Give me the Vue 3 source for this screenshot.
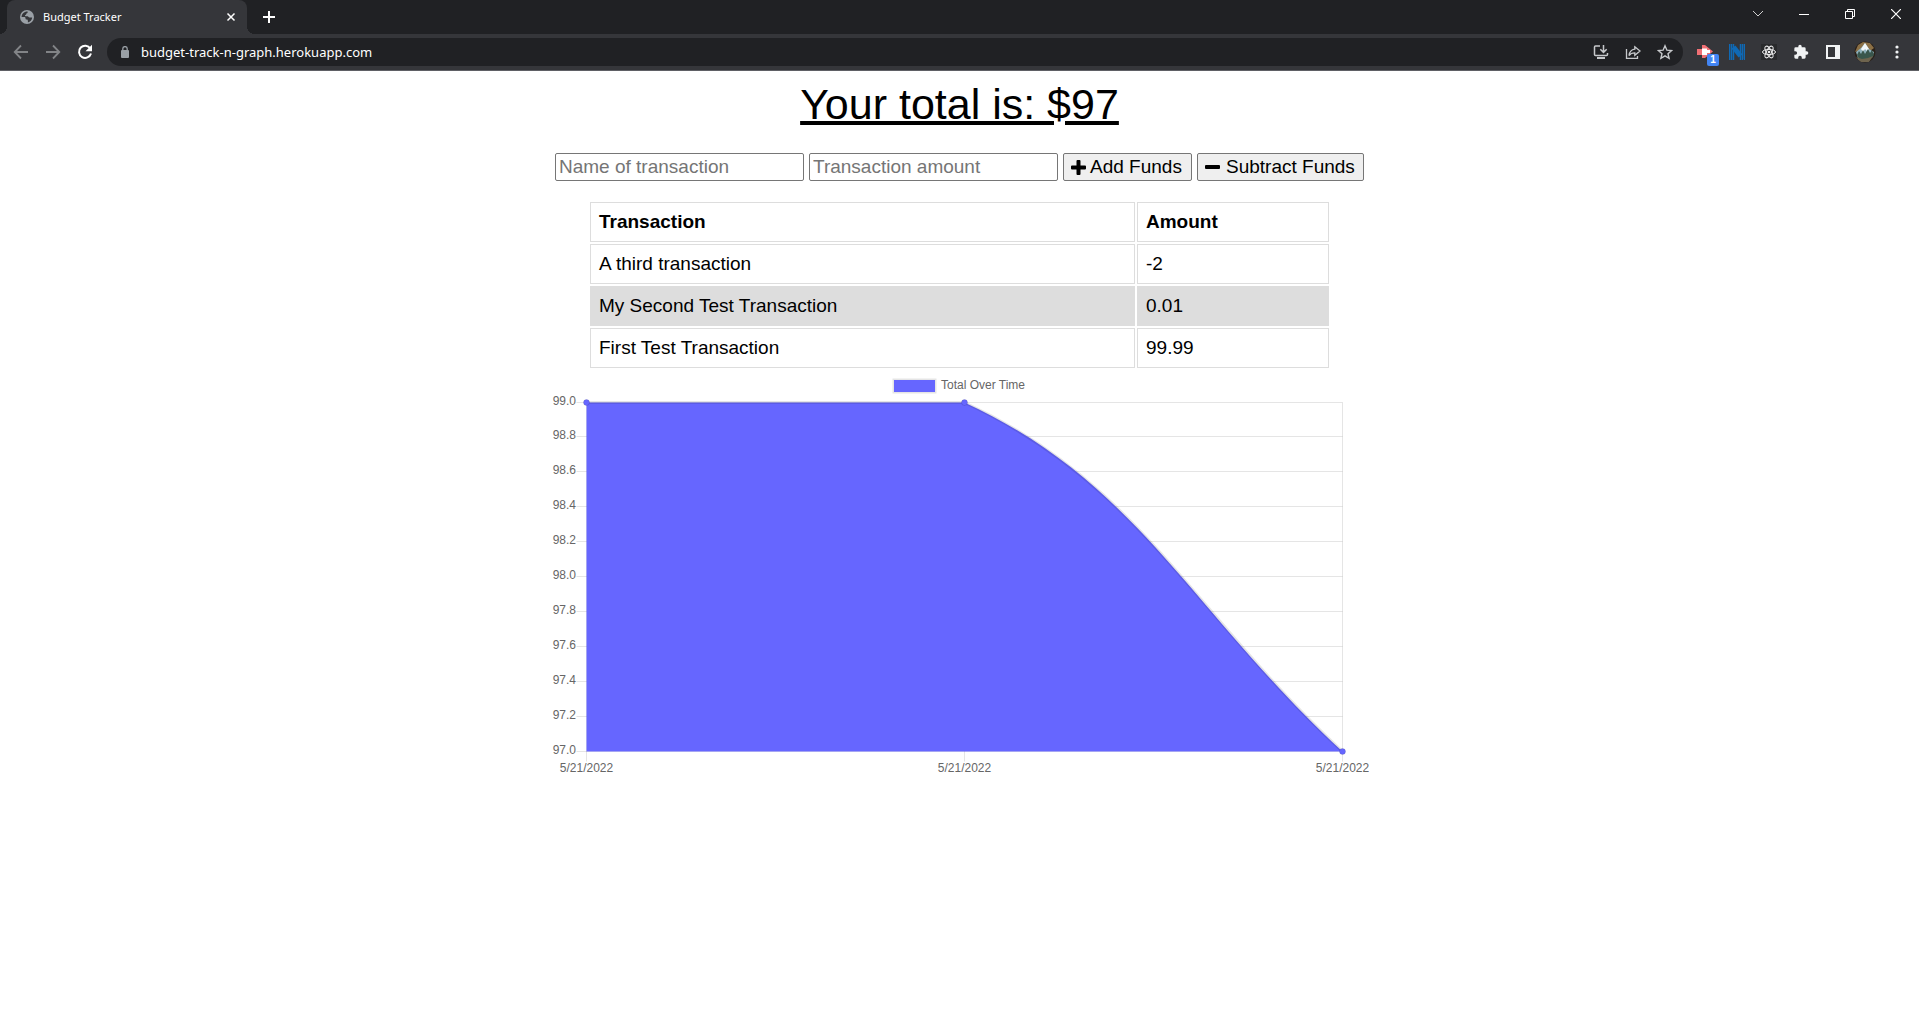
<script setup>
import { ref } from 'vue'

const name = ref('')
const amount = ref('')

const transactions = [
  { name: 'A third transaction', value: '-2' },
  { name: 'My Second Test Transaction', value: '0.01' },
  { name: 'First Test Transaction', value: '99.99' },
]

const left = 36.5
const right = 792.5
const middle = (left + right) / 2
const top = 32.5
const bottom = 381.5

const ticks = Array.from({ length: 11 }, (_, i) => ({
  label: (99 - i * 0.2).toFixed(1),
  y: Math.floor(32 + i * 34.9) + 0.5,
}))

const points = [
  { x: left, y: top },
  { x: middle, y: top },
  { x: right, y: bottom },
]

const line = `M${left} ${top}L${middle} ${top}C${middle + 174.4} ${top + 80.5} ${right - 151.2} ${bottom - 139.6} ${right} ${bottom}`
const area = `${line}L${left} ${bottom}Z`
</script>

<template>
  <div class="browser">
    <header class="chrome">
      <div class="tabstrip">
        <div class="tab">
          <svg class="favicon" width="14" height="14" viewBox="0 0 14 14" aria-hidden="true">
            <circle cx="7" cy="7" r="7" fill="#9aa0a6" />
            <path d="M7.6 1.6c.4 1-.2 1.7-1.2 1.9-.3.7-.2 1.2-1 1.5-.7.3-.5 1.2.2 1.2h2c.9 0 .9 1.3 1.9 1.3h2.7c-.2 2.6-2 4.5-4.3 4.900v-1.500c0-.8-.5-1.300-1.300-1.300-.8-.1-1.100-.6-1.100-1.400 0-.8-.5-1.200-1.200-1.200H1.600C1.500 4.300 4 1.500 7.600 1.600z" fill="#35363a" />
          </svg>
          <span class="tab-title">Budget Tracker</span>
          <button class="icon-button tab-close" aria-label="Close tab">
            <svg width="10" height="10" viewBox="0 0 10 10"><path d="M1.500 1.500l7 7M8.500 1.500l-7 7" stroke="#fff" stroke-width="1.500" /></svg>
          </button>
        </div>
        <button class="icon-button new-tab" aria-label="New tab">
          <svg width="12" height="12" viewBox="0 0 12 12"><path d="M6 0v12M0 6h12" stroke="#fff" stroke-width="2" /></svg>
        </button>
        <div class="window-controls">
          <button class="icon-button" aria-label="Search tabs">
            <svg width="12" height="12" viewBox="0 0 12 12"><path d="M1 3l5 5 5-5" fill="none" stroke="#d0d0d0" /></svg>
          </button>
          <button class="icon-button" aria-label="Minimize">
            <svg width="10" height="10" viewBox="0 0 10 10"><path d="M0 5.500h10" stroke="#fff" /></svg>
          </button>
          <button class="icon-button" aria-label="Restore">
            <svg width="10" height="10" viewBox="0 0 10 10"><path d="M.5 2.500h7v7h-7zM2.500 2.500v-2h7v7h-2" fill="none" stroke="#fff" /></svg>
          </button>
          <button class="icon-button" aria-label="Close">
            <svg width="10" height="10" viewBox="0 0 10 10"><path d="M0 0l10 10M10 0L0 10" stroke="#fff" stroke-width="1.200" /></svg>
          </button>
        </div>
      </div>

      <div class="toolbar">
        <button class="icon-button" aria-label="Back">
          <svg width="16" height="16" viewBox="0 0 16 16"><path d="M15 8H2M8 1.500L1.700 8 8 14.500" fill="none" stroke="#828487" stroke-width="1.800" /></svg>
        </button>
        <button class="icon-button" aria-label="Forward">
          <svg width="16" height="16" viewBox="0 0 16 16"><path d="M1 8h13M8 1.500L14.300 8 8 14.500" fill="none" stroke="#828487" stroke-width="1.800" /></svg>
        </button>
        <button class="icon-button" aria-label="Reload">
          <svg width="16" height="16" viewBox="0 0 16 16">
            <path d="M13.300 4.500A6.100 6.100 0 1 0 14 9.500" fill="none" stroke="#fff" stroke-width="2" />
            <path d="M15 .8v6.500H8.500z" fill="#fff" />
          </svg>
        </button>
        <div class="omnibox">
          <svg class="lock" width="8" height="12" viewBox="0 0 8 12" aria-hidden="true">
            <path d="M1.800 5V2.800a2.200 2.200 0 0 1 4.400 0V5" fill="none" stroke="#9aa0a6" stroke-width="1.300" />
            <rect y="4" width="8" height="8" rx="1" fill="#9aa0a6" />
          </svg>
          <input class="url" type="text" value="budget-track-n-graph.herokuapp.com" aria-label="Address" />
          <button class="icon-button" aria-label="Install app">
            <svg width="16" height="16" viewBox="0 0 16 16" fill="none" stroke="#c7c9cc" stroke-width="1.500">
              <path d="M7 2H2.500Q1.500 2 1.500 3v7.500q0 1 1 1h11q1 0 1-1V9" />
              <path d="M4 14h8" stroke-width="2" />
              <path d="M10.500 1v7M7.300 5.200l3.200 3.200 3.200-3.200" />
            </svg>
          </button>
          <button class="icon-button" aria-label="Share">
            <svg width="16" height="16" viewBox="0 0 16 16" fill="none" stroke="#c7c9cc" stroke-width="1.300">
              <path d="M1.500 5v9.300h11V12" />
              <path d="M9.800 2.800L15 7l-5.200 4.300V8.800C7 8.800 5.200 9.700 4 11.600c.4-3.500 2.300-5.900 5.800-6.400z" />
            </svg>
          </button>
          <button class="icon-button" aria-label="Bookmark">
            <svg width="16" height="16" viewBox="0 0 16 16"><path d="M8 1.800l1.900 4.400 4.700.4-3.600 3.100 1.100 4.700L8 11.900l-4.100 2.500L5 9.700 1.400 6.600l4.700-.4z" fill="none" stroke="#c7c9cc" stroke-width="1.400" /></svg>
          </button>
        </div>
        <div class="extensions">
          <button class="icon-button arrow-extension" aria-label="Arrow extension">
            <svg width="16" height="16" viewBox="0 0 16 16">
              <path d="M0 5h5V1h3l8 6.500L8 14H5v-3H0z" fill="#f06f74" />
              <path d="M5 4.500h5v1.500h3v3h-3v2H5z" fill="#fff" />
            </svg>
            <span class="badge">1</span>
          </button>
          <button class="icon-button" aria-label="N extension">
            <svg width="16" height="16" viewBox="0 0 16 16" stroke="#0f69b5">
              <path d="M.5 0v16M2.500 0v16M4.500 0v16M11.500 0v16M13.500 0v16M15.500 0v16" stroke-width="1.500" />
              <path d="M4.500 3L11.500 12" stroke-width="5" />
            </svg>
          </button>
          <button class="icon-button" aria-label="React developer tools">
            <svg width="16" height="16" viewBox="0 0 16 16">
              <rect width="16" height="16" fill="#292a2c" />
              <g fill="none" stroke="#eee" stroke-width="1">
                <ellipse cx="8" cy="8" rx="6.500" ry="2.600" />
                <ellipse cx="8" cy="8" rx="6.500" ry="2.600" transform="rotate(60 8 8)" />
                <ellipse cx="8" cy="8" rx="6.500" ry="2.600" transform="rotate(120 8 8)" />
              </g>
              <circle cx="8" cy="8" r="1.300" fill="#eee" />
            </svg>
          </button>
          <button class="icon-button" aria-label="Extensions">
            <svg width="16" height="16" viewBox="0 0 24 24"><path d="M20.500 11H19V7a2 2 0 0 0-2-2h-4V3.500a2.500 2.500 0 0 0-5 0V5H4a2 2 0 0 0-2 2v3.800h1.500a2.700 2.700 0 0 1 0 5.400H2V20a2 2 0 0 0 2 2h3.800v-1.500a2.700 2.700 0 0 1 5.400 0V22H17a2 2 0 0 0 2-2v-4h1.500a2.500 2.500 0 0 0 0-5z" fill="#f1f3f4" /></svg>
          </button>
          <button class="icon-button" aria-label="Side panel">
            <svg width="14" height="14" viewBox="0 0 14 14"><path d="M0 0h14v14H0zM2 2v10h7V2z" fill="#f1f3f4" fill-rule="evenodd" /></svg>
          </button>
          <button class="icon-button" aria-label="Profile">
            <svg width="22" height="22" viewBox="0 0 22 22">
              <defs><clipPath id="avatar"><circle cx="11" cy="11" r="10.500" /></clipPath></defs>
              <g clip-path="url(#avatar)">
                <path d="M0 0h22v22H0z" fill="#2b2119" />
                <path d="M4 4l5-3 7 1 4 5-4 3L11 3 6 9 1 11z" fill="#8b7046" />
                <path d="M2 11l5-4 4-5 4 6 5 3-2 6H4z" fill="#8eb1bd" />
                <path d="M7 8l4-6 4 6-2 2-2-2-2 3z" fill="#f2f7f8" />
                <path d="M3 14l2-4 2 3 2-4 2 4 3-5 2 4 2-3 2 5-3 4H5z" fill="#39564c" />
                <path d="M2 16l6 2 6-1 5-2-4 6H6z" fill="#6e644e" />
              </g>
            </svg>
          </button>
          <button class="icon-button" aria-label="Menu">
            <svg width="4" height="14" viewBox="0 0 4 14" fill="#f1f3f4"><circle cx="2" cy="2" r="1.600" /><circle cx="2" cy="7" r="1.600" /><circle cx="2" cy="12" r="1.600" /></svg>
          </button>
        </div>
      </div>
    </header>

    <main class="page">
      <h1 class="total">Your total is: $97</h1>

      <form class="form" @submit.prevent>
        <input v-model="name" class="field" type="text" placeholder="Name of transaction" aria-label="Name of transaction" />
        <input v-model="amount" class="field" type="text" placeholder="Transaction amount" aria-label="Transaction amount" />
        <button class="action add" type="button">
          <svg width="15" height="15" viewBox="0 0 15 15" aria-hidden="true"><path d="M5.500 1q0-1 1-1h2q1 0 1 1v4.500H14q1 0 1 1v2q0 1-1 1H9.500V14q0 1-1 1h-2q-1 0-1-1V9.500H1q-1 0-1-1v-2q0-1 1-1h4.500z" /></svg>
          Add Funds
        </button>
        <button class="action subtract" type="button">
          <svg width="15" height="15" viewBox="0 0 15 15" aria-hidden="true"><rect y="5" width="15" height="4" rx="1" /></svg>
          Subtract Funds
        </button>
      </form>

      <table class="transactions">
        <thead>
          <tr><th>Transaction</th><th class="amount">Amount</th></tr>
        </thead>
        <tbody>
          <tr v-for="t in transactions" :key="t.name">
            <td>{{ t.name }}</td>
            <td>{{ t.value }}</td>
          </tr>
        </tbody>
      </table>

      <svg class="chart" viewBox="0 0 819 410" role="img" aria-label="Total Over Time">
        <rect class="swatch" x="344" y="10" width="41" height="12" fill="#66f" stroke="#e5e5e5" stroke-width="3" />
        <text x="391" y="19">Total Over Time</text>

        <g stroke="#000" stroke-opacity=".1">
          <line v-for="t in ticks" :key="t.label" :x1="left - 10" :x2="right" :y1="t.y" :y2="t.y" />
          <line v-for="p in points" :key="p.x" :x1="p.x" :x2="p.x" :y1="top" :y2="bottom + 10" />
        </g>
        <path :d="area" fill="#66f" />
        <path :d="line" fill="none" stroke="#000" stroke-opacity=".1" stroke-width="3" />
        <circle v-for="p in points" :key="p.x" :cx="p.x" :cy="p.y" r="3" fill="#66f" stroke="#000" stroke-opacity=".1" />

        <text v-for="t in ticks" :key="t.label" x="26" :y="t.y + 2.5" text-anchor="end">{{ t.label }}</text>
        <text v-for="p in points" :key="p.x" :x="p.x" y="402" text-anchor="middle">5/21/2022</text>
      </svg>
    </main>
  </div>
</template>

<style>
body {
  margin: 0;
  background: #fff;
}
</style>

<style scoped>
.browser {
  font-family: "Liberation Sans", Arial, sans-serif;
  color: #000;
}
.chrome {
  font-family: "Noto Sans", "Open Sans", sans-serif;
  background: #35363a;
  color: #fff;
  border-bottom: 1px solid #5f6065;
}
.icon-button {
  display: flex;
  align-items: center;
  justify-content: center;
  flex: none;
  width: 32px;
  height: 28px;
  padding: 0;
  border: 0;
  background: none;
}
.tabstrip {
  display: flex;
  height: 34px;
  padding-left: 7px;
  background: #202124;
}
.tab {
  position: relative;
  display: flex;
  align-items: center;
  box-sizing: border-box;
  width: 240px;
  padding: 0 8px 0 13px;
  border-radius: 8px 8px 0 0;
  background: #35363a;
}
.tab::before,
.tab::after {
  content: "";
  position: absolute;
  bottom: 0;
  width: 8px;
  height: 8px;
}
.tab::before {
  right: 100%;
  background: radial-gradient(circle at 0 0, #202124 8px, #35363a 8px);
}
.tab::after {
  left: 100%;
  background: radial-gradient(circle at 100% 0, #202124 8px, #35363a 8px);
}
.tab-title {
  flex: 1;
  margin-left: 9px;
  padding-bottom: 2px;
  font-size: 11px;
}
.tab-close {
  width: 16px;
}
.new-tab {
  height: 34px;
  margin-left: 6px;
}
.window-controls {
  display: flex;
  margin-left: auto;
}
.window-controls .icon-button {
  width: 46px;
}
.toolbar {
  display: flex;
  align-items: center;
  height: 36px;
  padding: 0 6px 0 5px;
}
.omnibox {
  display: flex;
  align-items: center;
  flex: 1;
  height: 28px;
  margin: 0 6px;
  padding: 0 2px 0 14px;
  border-radius: 14px;
  background: #202124;
}
.url {
  flex: 1;
  margin-left: 12px;
  padding: 0;
  border: 0;
  background: none;
  color: #fff;
  font-family: inherit;
  font-size: 13px;
}
.extensions {
  display: flex;
}
.arrow-extension {
  position: relative;
}
.badge {
  position: absolute;
  right: 2px;
  bottom: 0;
  width: 12px;
  border-radius: 2px;
  background: #4285f4;
  color: #fff;
  font-size: 10px;
  font-weight: 700;
  line-height: 12px;
  text-align: center;
}
.page {
  display: flex;
  flex-direction: column;
  align-items: center;
  max-width: 819px;
  margin: 0 auto;
  padding-top: 8px;
  font-size: 19px;
}
.total {
  margin: 0 0 24px;
  font-size: 43px;
  font-weight: 400;
  line-height: 50px;
  text-decoration: underline;
  text-decoration-thickness: 4px;
}
.form {
  display: flex;
  gap: 5px;
}
.field,
.action {
  box-sizing: border-box;
  height: 28px;
  border: 1px solid #767676;
  border-radius: 2px;
  color: #000;
  font-family: inherit;
  font-size: 19px;
}
.field {
  width: 249px;
  padding: 1px 3px;
}
.field::placeholder {
  color: #757575;
}
.action {
  display: flex;
  align-items: center;
  padding: 0 7px;
  background: #efefef;
  line-height: 24px;
  white-space: nowrap;
}
.add {
  gap: 4px;
  width: 129px;
}
.subtract {
  gap: 6px;
  width: 167px;
}
.transactions {
  width: 743px;
  max-width: 100%;
  margin-top: 19px;
  border-spacing: 2px;
  text-align: left;
}
.transactions th,
.transactions td {
  padding: 8px;
  border: 1px solid #ddd;
  line-height: 22px;
}
.transactions .amount {
  width: 174px;
}
.transactions tbody tr:nth-child(even) td {
  background: #ddd;
}
.chart {
  display: block;
  width: 100%;
}
.chart text {
  fill: #666;
  font-size: 12px;
}
.swatch {
  paint-order: stroke;
}
</style>
